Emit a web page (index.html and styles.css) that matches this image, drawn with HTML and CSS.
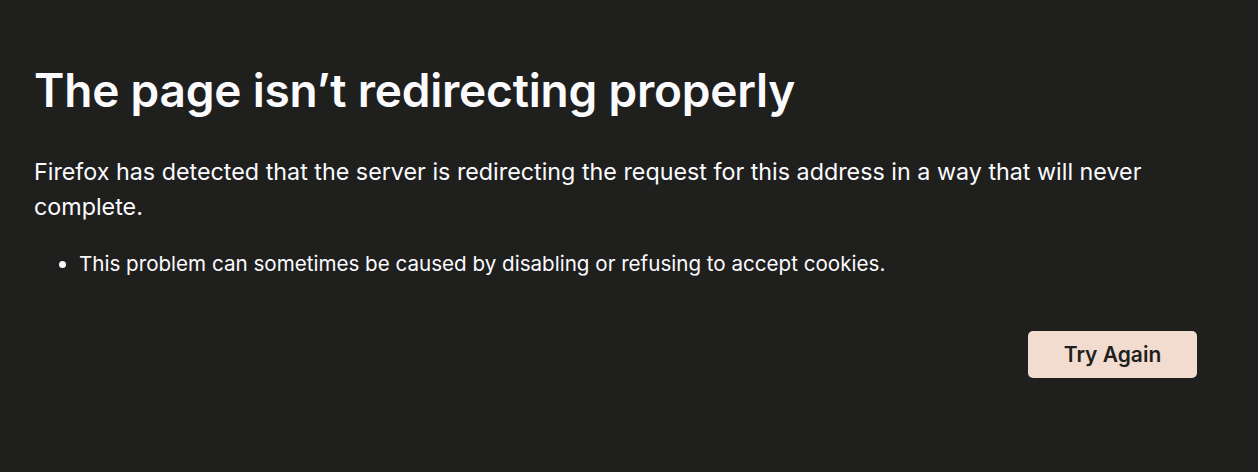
FILE: index.html
```html
<!DOCTYPE html>
<html lang="en">
<head>
<meta charset="utf-8">
<title>Problem loading page</title>
<link rel="stylesheet" href="styles.css">
</head>
<body>
<main class="container">
  <h1 class="title">The page isn’t redirecting properly</h1>
  <p class="desc">Firefox has detected that the server is redirecting the request for this address in a way that will never complete.</p>
  <ul class="list">
    <li>This problem can sometimes be caused by disabling or refusing to accept cookies.</li>
  </ul>
  <div class="actions">
    <button class="btn">Try Again</button>
  </div>
</main>
</body>
</html>
```
FILE: styles.css
```css
html, body {
  margin: 0;
  background: #1f1f1e;
  color: #fbfbfe;
  font-family: Inter, "Noto Sans", sans-serif;
}
.container {
  width: 1163px;
  padding: 57px 0 0 34px;
  box-sizing: content-box;
}
.title {
  margin: 0;
  font-size: 46px;
  font-weight: 600;
  line-height: 66px;
  letter-spacing: -0.2px;
}
.desc {
  margin: 31px 0 0;
  font-size: 23.3px;
  line-height: 35px;
  max-width: 1130px;
}
.list {
  margin: 26px 0 0;
  padding-left: 45px;
  font-size: 20.6px;
  line-height: 28px;
}
.actions {
  display: flex;
  justify-content: flex-end;
  margin-top: 53px;
}
.btn {
  width: 169px;
  height: 47px;
  border: none;
  border-radius: 5px;
  background: #f2dccf;
  color: #1f1f1e;
  font-family: Inter, sans-serif;
  font-size: 21px;
  font-weight: 600;
}
```
